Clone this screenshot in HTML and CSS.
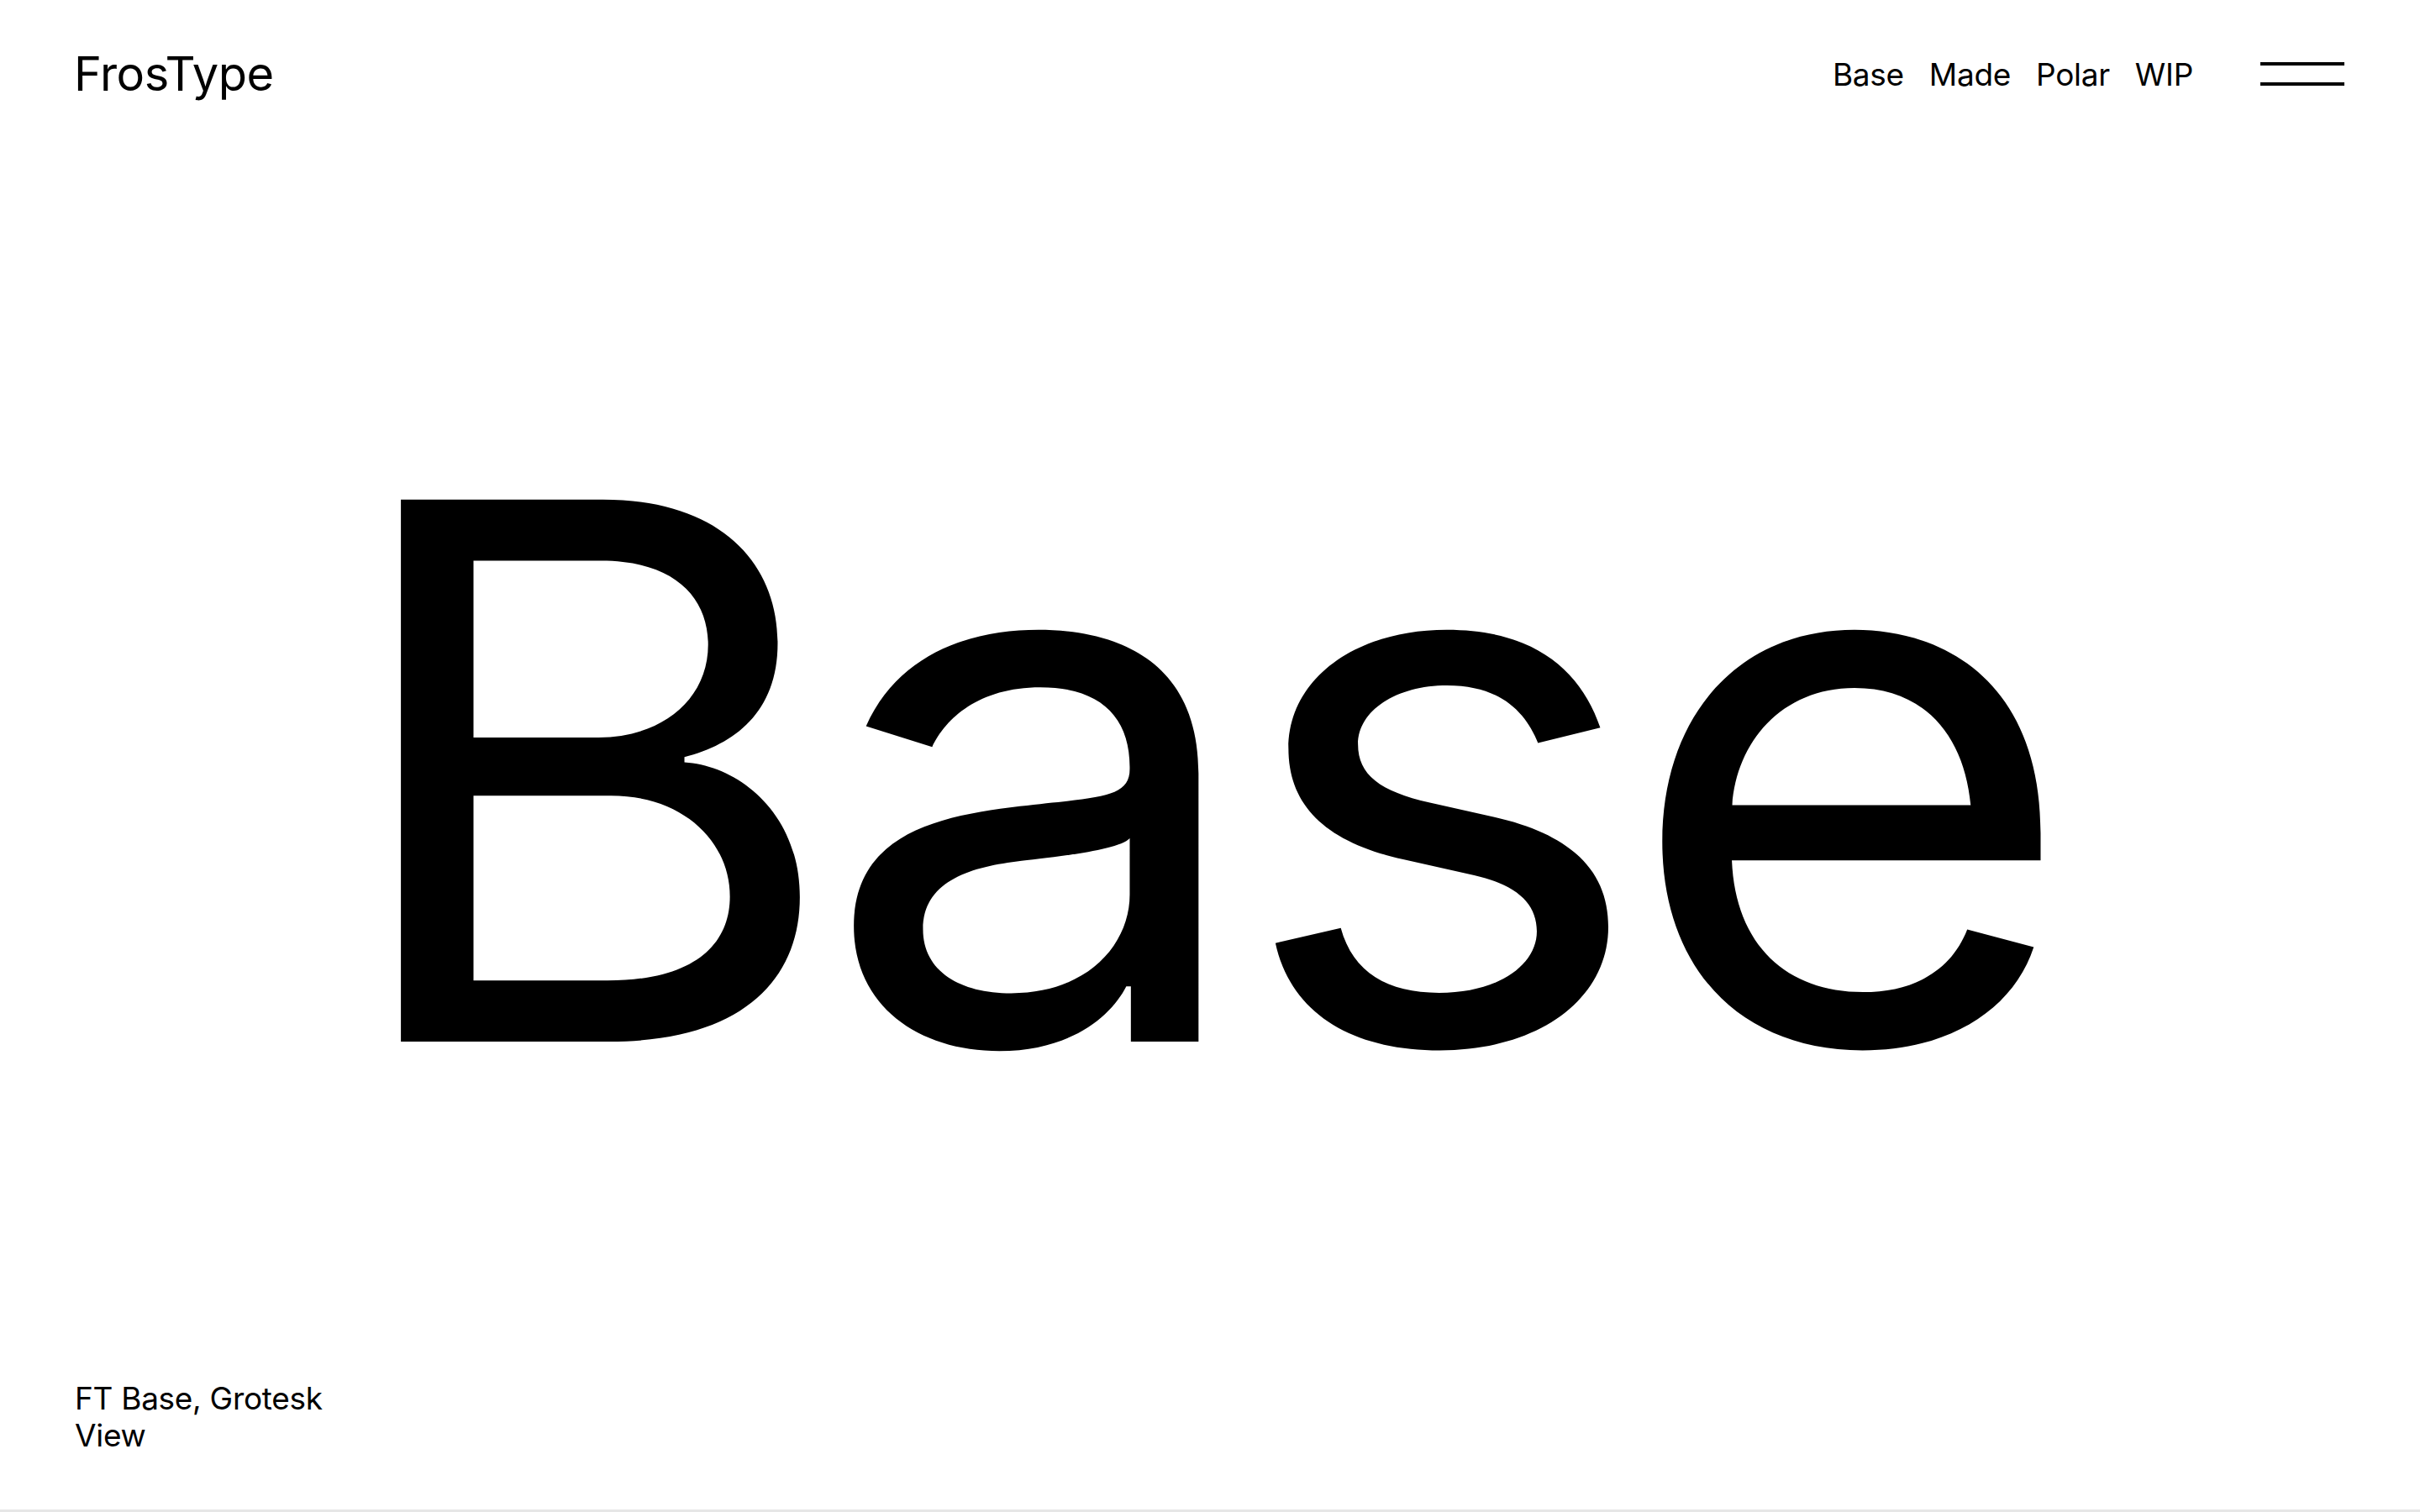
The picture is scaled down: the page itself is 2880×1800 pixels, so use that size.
FILE: index.html
```html
<!DOCTYPE html>
<html lang="en">
<head>
<meta charset="utf-8">
<title>FrosType — FT Base</title>
<link rel="stylesheet" href="styles.css">
</head>
<body>
<div class="page">
  <header class="header">
    <a class="logo" href="#">FrosType</a>
    <div class="header-right">
      <nav class="nav">
        <a href="#">Base</a>
        <a href="#">Made</a>
        <a href="#">Polar</a>
        <a href="#">WIP</a>
      </nav>
      <button class="menu" aria-label="Menu">
        <span class="menu-line"></span>
        <span class="menu-line"></span>
      </button>
    </div>
  </header>
  <main class="hero">
    <h1 class="specimen">Base</h1>
  </main>
  <footer class="footer">
    <div class="footer-title">FT Base, Grotesk</div>
    <a class="footer-link" href="#">View</a>
  </footer>
  <div class="bottom-bar"></div>
</div>
</body>
</html>
```

FILE: styles.css
```css
* {
  box-sizing: border-box;
}

html, body {
  margin: 0;
  padding: 0;
  background: #ffffff;
  color: #000000;
  font-family: Inter, "Noto Sans", sans-serif;
}

a {
  color: inherit;
  text-decoration: none;
}

.page {
  height: 100vh;
  display: flex;
  flex-direction: column;
  overflow: hidden;
}

.header {
  height: 176px;
  flex: none;
  display: flex;
  align-items: center;
  justify-content: space-between;
  padding: 0 90px 0 88px;
}

.logo {
  font-size: 56px;
  line-height: 1;
  letter-spacing: -0.5px;
}

.header-right {
  display: flex;
  align-items: center;
  gap: 80px;
}

.nav {
  display: flex;
  align-items: center;
  gap: 30px;
}

.nav a {
  font-size: 37px;
  line-height: 1;
  letter-spacing: -0.3px;
}

.menu {
  width: 100px;
  height: 28px;
  padding: 0;
  margin: 0;
  border: 0;
  background: transparent;
  display: flex;
  flex-direction: column;
  justify-content: space-between;
  cursor: pointer;
}

.menu-line {
  display: block;
  width: 100%;
  height: 4px;
  background: #000000;
}

.hero {
  flex: 1;
  display: flex;
  align-items: center;
  justify-content: center;
  padding-top: 16px;
}

.specimen {
  margin: 0;
  padding-right: 39px;
  font-size: 887px;
  font-weight: 400;
  line-height: 1;
  letter-spacing: -28px;
  transform: scaleX(1.05);
}

.footer {
  flex: none;
  padding: 0 0 66px 89px;
  font-size: 37px;
  line-height: 44px;
  letter-spacing: -0.3px;
}

.footer-title,
.footer-link {
  display: block;
}

.bottom-bar {
  flex: none;
  height: 3px;
  background: #e6e6e6;
}
```
